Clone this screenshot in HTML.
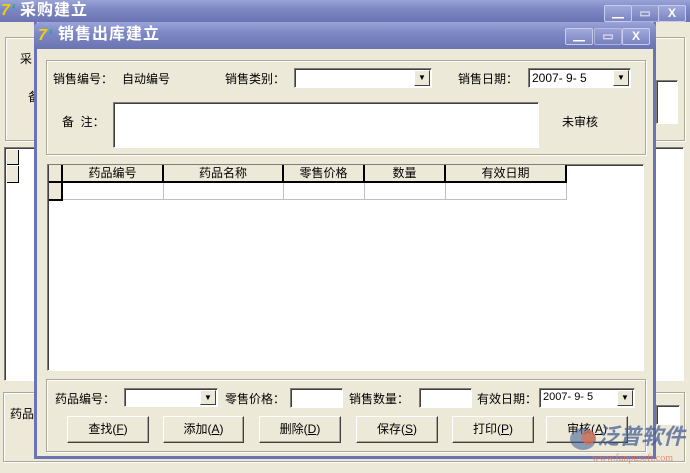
<!DOCTYPE html>
<html><head><meta charset="utf-8"><style>
*{margin:0;padding:0;box-sizing:border-box}
html,body{width:690px;height:473px;overflow:hidden}
body{background:#ece9d8;position:relative;font-family:"Liberation Sans","Noto Sans CJK SC","WenQuanYi Zen Hei",sans-serif;font-size:12px;color:#000}
.a{position:absolute;white-space:nowrap}
.tb{background:linear-gradient(#9aa3d8,#7e88c4 40%,#6b74b2)}
.title{color:#fff;font-size:16px;line-height:18px;font-weight:bold;letter-spacing:1px}
.grp{position:absolute;border:1px solid #aca899;box-shadow:inset 1px 1px 0 #fff,1px 1px 0 #fff}
.sunk{position:absolute;background:#fff;border:1px solid;border-color:#7f7d76 #fff #fff #7f7d76;box-shadow:inset 1px 1px 0 #404040}
.dd{position:absolute;right:1px;top:1px;bottom:1px;width:16px;background:#ece9d8;border:1px solid;border-color:#fff #404040 #404040 #fff;font-size:8px;text-align:center;line-height:14px}
.btn{position:absolute;height:27px;background:#ece9d8;border:1px solid;border-color:#fff #404040 #404040 #fff;box-shadow:inset -1px -1px 0 #aca899;text-align:center;line-height:25px;font-size:12px}
.wb{position:absolute;width:28px;height:17px;border:1px solid #c8cdee;border-radius:2px;background:linear-gradient(#a2aadc,#7b84c0);color:#fff;font-weight:bold;font-size:12px;text-align:center;line-height:15px}
.th{position:absolute;top:0;height:18px;background:#ece9d8;border-right:2px solid #000;border-bottom:2px solid #000;text-align:center;line-height:16px;font-size:12px}
.td{position:absolute;top:18px;height:17px;border-right:1px solid #c0c0c0;border-bottom:1px solid #c0c0c0}
</style></head><body>
<div class="a tb" style="left:0;top:0;width:690px;height:22px"></div>
<div class="a title" style="left:1px;top:2px;font-style:italic;color:#f0d000">7<span style="color:#2a8">ʻ</span></div>
<div class="a title" style="left:20px;top:2px">采购建立</div>
<div class="wb" style="left:604px;top:5px">▁</div>
<div class="wb" style="left:631px;top:5px;opacity:.7">▭</div>
<div class="wb" style="left:658px;top:5px">X</div>
<div class="grp" style="left:5px;top:37px;width:680px;height:104px"></div>
<div class="a" style="left:20px;top:50px">采</div>
<div class="a" style="left:28px;top:88px">备</div>
<div class="sunk" style="left:656px;top:80px;width:22px;height:44px"></div>
<div class="sunk" style="left:4px;top:147px;width:680px;height:234px"></div>
<div class="a" style="left:7px;top:150px;width:12px;height:15px;background:#ece9d8;border-right:1px solid #000;border-bottom:1px solid #000"></div>
<div class="a" style="left:7px;top:166px;width:12px;height:17px;background:#ece9d8;border-right:1px solid #000;border-bottom:1px solid #000"></div>
<div class="grp" style="left:3px;top:392px;width:682px;height:70px"></div>
<div class="a" style="left:10px;top:405px">药品</div>
<div class="sunk" style="left:656px;top:405px;width:24px;height:20px"></div>

<div class="a" style="left:34px;top:22px;width:622px;height:437px;border:3px solid #6b74b2;border-top:0;background:#ece9d8"></div>
<div class="a tb" style="left:34px;top:22px;width:622px;height:27px;border-radius:6px 6px 0 0"></div>
<div class="a title" style="left:38px;top:27px;font-style:italic;color:#f0d000">7<span style="color:#2a8">ʻ</span></div>
<div class="a title" style="left:58px;top:26px">销售出库建立</div>
<div class="wb" style="left:565px;top:28px">▁</div>
<div class="wb" style="left:594px;top:28px;opacity:.7">▭</div>
<div class="wb" style="left:622px;top:28px">X</div>

<div class="grp" style="left:46px;top:60px;width:600px;height:95px"></div>
<div class="a" style="left:53px;top:70px">销售编号：</div>
<div class="a" style="left:122px;top:70px">自动编号</div>
<div class="a" style="left:225px;top:70px">销售类别：</div>
<div class="sunk" style="left:294px;top:68px;width:138px;height:20px"><div class="dd">▼</div></div>
<div class="a" style="left:458px;top:70px">销售日期：</div>
<div class="sunk" style="left:528px;top:68px;width:103px;height:20px;padding:2px 3px">2007- 9- 5<div class="dd">▼</div></div>
<div class="a" style="left:62px;top:113px">备&nbsp;&nbsp;注：</div>
<div class="sunk" style="left:113px;top:102px;width:426px;height:46px"></div>
<div class="a" style="left:562px;top:113px">未审核</div>

<div class="sunk" style="left:47px;top:164px;width:597px;height:207px">
 <div class="th" style="left:1px;width:14px"></div>
 <div class="th" style="left:15px;width:101px">药品编号</div>
 <div class="th" style="left:116px;width:120px">药品名称</div>
 <div class="th" style="left:236px;width:81px">零售价格</div>
 <div class="th" style="left:317px;width:81px">数量</div>
 <div class="th" style="left:398px;width:121px">有效日期</div>
 <div class="th" style="left:1px;top:18px;width:14px;height:18px"></div>
 <div class="td" style="left:15px;width:101px"></div>
 <div class="td" style="left:116px;width:120px"></div>
 <div class="td" style="left:236px;width:81px"></div>
 <div class="td" style="left:317px;width:81px"></div>
 <div class="td" style="left:398px;width:121px"></div>
</div>

<div class="grp" style="left:46px;top:379px;width:600px;height:73px"></div>
<div class="a" style="left:55px;top:390px">药品编号：</div>
<div class="sunk" style="left:124px;top:388px;width:94px;height:19px"><div class="dd">▼</div></div>
<div class="a" style="left:225px;top:390px">零售价格：</div>
<div class="sunk" style="left:290px;top:388px;width:53px;height:20px"></div>
<div class="a" style="left:349px;top:390px">销售数量：</div>
<div class="sunk" style="left:419px;top:388px;width:53px;height:20px"></div>
<div class="a" style="left:477px;top:390px">有效日期：</div>
<div class="sunk" style="left:539px;top:388px;width:96px;height:20px;padding:2px 3px;font-size:11px">2007- 9- 5<div class="dd">▼</div></div>
<div class="btn" style="left:67px;top:416px;width:82px">查找(<u>F</u>)</div>
<div class="btn" style="left:163px;top:416px;width:81px">添加(<u>A</u>)</div>
<div class="btn" style="left:259px;top:416px;width:82px">删除(<u>D</u>)</div>
<div class="btn" style="left:356px;top:416px;width:82px">保存(<u>S</u>)</div>
<div class="btn" style="left:452px;top:416px;width:82px">打印(<u>P</u>)</div>
<div class="btn" style="left:546px;top:416px;width:82px">审核(<u>A</u>)</div>

<div class="a" style="left:570px;top:428px;width:26px;height:22px;border-radius:50%;background:rgba(60,90,150,.55)"></div>
<div class="a" style="left:582px;top:430px;width:13px;height:15px;border-radius:50%;background:rgba(230,110,70,.7)"></div>
<div class="a" style="left:597px;top:424px;font-size:22px;line-height:26px;font-style:italic;color:rgba(70,95,150,.75);font-weight:bold">泛普软件</div>
<div class="a" style="left:592px;top:453px;font-size:10px;line-height:12px;color:rgba(230,120,90,.8);font-family:'Liberation Serif',serif">www.fanpusoft.com</div>
</body></html>
